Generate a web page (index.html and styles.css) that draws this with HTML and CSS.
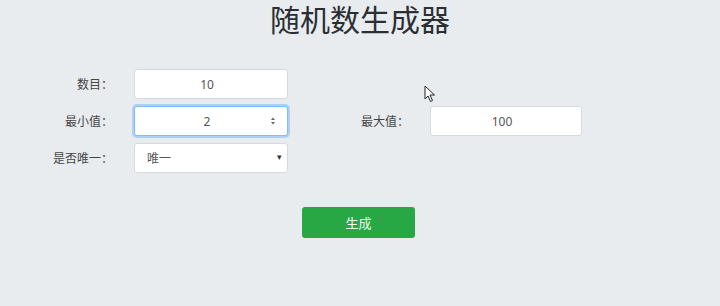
FILE: index.html
```html
<!DOCTYPE html>
<html>
  <head>
    <meta charset="utf-8">
    <title>随机数生成器</title>
    <link rel="stylesheet" href="styles.css">
  </head>
  <body>
    <h1>随机数生成器</h1>

    <div class="form-grid">
      <label class="form-label" for="count">数目：</label>
      <input type="text" class="form-input" id="count" value="10">
      <div></div>
      <div></div>

      <label class="form-label" for="min">最小值：</label>
      <div class="spin-wrap">
        <input type="text" class="form-input focused" id="min" value="2">
        <svg class="spin" width="6" height="10" viewBox="0 0 6 10">
          <path d="M1 4 L3 1.5 L5 4 Z M1 6 L3 8.5 L5 6 Z" fill="#666"/>
        </svg>
      </div>
      <label class="form-label" for="max">最大值：</label>
      <input type="text" class="form-input" id="max" value="100">

      <label class="form-label" for="unique">是否唯一：</label>
      <div class="select-wrap">
        <select class="form-select" id="unique">
          <option>唯一</option>
          <option>不唯一</option>
        </select>
      </div>
      <div></div>
      <div></div>
    </div>

    <div class="controls">
      <button class="btn">生成</button>
    </div>

    <svg class="cursor" width="12" height="18" viewBox="0 0 12 18">
      <path d="M1 1 L1 14 L4 11 L6.5 16.5 L8.5 15.5 L6 10 L10.5 10 Z" fill="#fff" stroke="#222" stroke-width="1"/>
    </svg>
  </body>
</html>
```

FILE: styles.css
```css
html, body {
  margin: 0;
  height: 100%;
}

body {
  background-color: #e9ecef;
  color: #333;
  font-family: "Noto Sans", "Noto Sans CJK SC", sans-serif;
  font-size: 12px;
  padding: 0 8px;
  position: relative;
}

h1 {
  margin: 0;
  padding-top: 2px;
  text-align: center;
  font-size: 30px;
  font-weight: normal;
  line-height: 36px;
  color: #2b2f33;
}

.form-grid {
  margin-top: 31px;
  display: grid;
  grid-template-columns: 105px 154px 100px 152px;
  grid-auto-rows: 30px;
  column-gap: 21px;
  row-gap: 7px;
}

.form-label {
  display: flex;
  align-items: center;
  justify-content: flex-end;
  color: #444;
  font-size: 12px;
}

.form-input, .form-select {
  box-sizing: border-box;
  width: 100%;
  height: 30px;
  border: 1px solid #d6dade;
  border-radius: 3px;
  background-color: #fff;
  color: #555;
  font-family: inherit;
  font-size: 12px;
  outline: none;
}

.form-input {
  text-align: center;
  padding: 0 14px 0 6px;
}

.form-input.focused {
  border-color: #80bdff;
  box-shadow: 0 0 0 2px rgba(0, 123, 255, 0.25);
}

.spin-wrap, .select-wrap {
  position: relative;
}

.spin {
  position: absolute;
  right: 12px;
  top: 10px;
}

.form-select {
  appearance: none;
  -webkit-appearance: none;
  padding: 0 12px;
  text-align: left;
}

.select-wrap::after {
  content: "▾";
  position: absolute;
  right: 6px;
  top: 7px;
  font-size: 9px;
  color: #333;
  pointer-events: none;
}

.controls {
  margin-top: 34px;
  display: flex;
  justify-content: center;
}

.btn {
  width: 113px;
  height: 31px;
  margin-left: -3px;
  border: unset;
  border-radius: 3px;
  background-color: #28a745;
  color: #f4f8f4;
  font-family: inherit;
  font-size: 13px;
  cursor: pointer;
}

.cursor {
  position: absolute;
  left: 424px;
  top: 85px;
}
```
